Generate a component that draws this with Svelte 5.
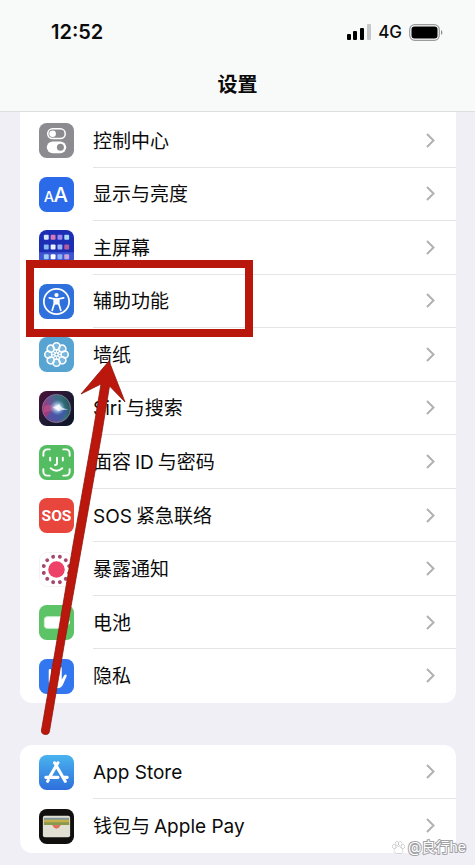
<script lang="ts">
	interface Row {
		icon: string;
		// runs of text, split where the script changes
		label: string[];
	}

	const general: Row[] = [
		{ icon: 'control', label: ['控制中心'] },
		{ icon: 'display', label: ['显示与亮度'] },
		{ icon: 'home', label: ['主屏幕'] },
		{ icon: 'access', label: ['辅助功能'] },
		{ icon: 'wallpaper', label: ['墙纸'] },
		{ icon: 'siri', label: ['Siri', '与搜索'] },
		{ icon: 'face', label: ['面容', 'ID', '与密码'] },
		{ icon: 'sos', label: ['SOS', '紧急联络'] },
		{ icon: 'exposure', label: ['暴露通知'] },
		{ icon: 'battery', label: ['电池'] },
		{ icon: 'privacy', label: ['隐私'] }
	];
	const store: Row[] = [
		{ icon: 'appstore', label: ['App Store'] },
		{ icon: 'wallet', label: ['钱包与', 'Apple Pay'] }
	];
	const groups = [general, store];

	const petals = [0, 45, 90, 135, 180, 225, 270, 315];
	const dots = [15, 45, 75, 105, 135, 165, 195, 225, 255, 285, 315, 345];
	const apps = [
		['#d9e6ff', '#d779b5', '#9b86f0', '#a9d8f5'],
		['#83b8f2', '#e8f3ff', '#9db4f5', '#b55a9c'],
		['#9ecbf7', '#ffffff', '#8eb0f5', '#c9a3dc']
	];
</script>

{#snippet icon(name: string)}
	<svg class="icon" viewBox="0 0 36 36" aria-hidden="true">
		{#if name === 'control'}
			<rect width="36" height="36" rx="8" fill="#8c8c90" />
			<rect x="9" y="6" width="18" height="10" rx="5" fill="none" stroke="#fff" stroke-width="1.6" />
			<circle cx="14" cy="11" r="3.4" fill="#fff" />
			<rect x="8" y="19" width="20" height="12" rx="6" fill="#fff" />
			<circle cx="22" cy="25" r="3.6" fill="#8c8c90" />
		{:else if name === 'display'}
			<rect width="36" height="36" rx="8" fill="#2b6bea" />
			<text x="5" y="26" font-size="15" font-weight="500" fill="#fff">A</text>
			<text x="15" y="26" font-size="21" font-weight="500" fill="#fff">A</text>
		{:else if name === 'home'}
			<rect width="36" height="36" rx="8" fill="#1c2fb4" />
			<path d="M0 23h36v5a8 8 0 0 1-8 8H8a8 8 0 0 1-8-8z" fill="#3d55cf" />
			{#each apps as line, r}
				{#each line as color, c}
					<rect x={5 + c * 7} y={5 + r * 10} width="5" height="5" rx="1" fill={color} />
				{/each}
			{/each}
		{:else if name === 'access'}
			<rect width="36" height="36" rx="8" fill="#2e70dc" />
			<circle cx="18" cy="18" r="13" fill="none" stroke="#fff" stroke-width="1.8" />
			<circle cx="18" cy="11.4" r="2.2" fill="#fff" />
			<path
				d="M10.6 14.2l5.2 1.2v4.6l-2.2 7M25.4 14.2l-5.2 1.2v4.6l2.2 7"
				fill="none"
				stroke="#fff"
				stroke-width="1.8"
				stroke-linecap="round"
			/>
			<path d="M15.2 14.6h5.6v6.6h-5.6z" fill="#fff" />
		{:else if name === 'wallpaper'}
			<rect width="36" height="36" rx="8" fill="#57a3d2" />
			{#each petals as angle}
				<circle
					cx="18"
					cy="9.6"
					r="3.7"
					fill="#a6d0e8"
					fill-opacity=".45"
					stroke="#fff"
					stroke-width="1.6"
					transform="rotate({angle} 18 18)"
				/>
				<circle cx="18" cy="14" r="1.6" fill="none" stroke="#fff" transform="rotate({angle + 22} 18 18)" />
			{/each}
			<circle cx="18" cy="18" r="2.2" fill="#fff" />
			<circle cx="18" cy="18" r="1" fill="#57a3d2" />
		{:else if name === 'siri'}
			<defs>
				<linearGradient id="siri-bg" x1="0" y1="0" x2="1" y2="1">
					<stop offset="0" stop-color="#4b1238" />
					<stop offset=".5" stop-color="#1f1a33" />
					<stop offset="1" stop-color="#0c1526" />
				</linearGradient>
				<linearGradient id="siri-orb" x1="0" y1=".6" x2="1" y2=".3">
					<stop offset="0" stop-color="#b52f74" />
					<stop offset=".4" stop-color="#5f5a96" />
					<stop offset=".7" stop-color="#33727c" />
					<stop offset="1" stop-color="#27515a" />
				</linearGradient>
				<radialGradient id="siri-glow">
					<stop offset="0" stop-color="#fff" />
					<stop offset=".3" stop-color="#d8efff" stop-opacity=".85" />
					<stop offset="1" stop-color="#8ab8f0" stop-opacity="0" />
				</radialGradient>
			</defs>
			<rect width="36" height="36" rx="8" fill="url(#siri-bg)" />
			<circle cx="18" cy="18" r="14.5" fill="url(#siri-orb)" stroke="#8f7f9c" stroke-width=".8" />
			<path d="M7 27c5-6 10-8 23-9-2 8-8 13-14 13-4 0-7-2-9-4z" fill="#3e55ad" fill-opacity=".7" />
			<path d="M5 16c6-3 11-1 15 1-5 3-10 4-15 5z" fill="#d0568f" fill-opacity=".5" />
			<circle cx="19" cy="17" r="8" fill="url(#siri-glow)" />
			<path d="M14 17q5-2 7-4 0 4 9 6-7 0-10 2-2-3-6-4z" fill="#fff" fill-opacity=".7" />
		{:else if name === 'face'}
			<rect width="36" height="36" rx="8" fill="#55bd61" />
			<g fill="none" stroke="#fff" stroke-width="2" stroke-linecap="round">
				<path d="M4.5 11V8.5a4 4 0 0 1 4-4H11M25 4.5h2.5a4 4 0 0 1 4 4V11M31.5 25v2.5a4 4 0 0 1-4 4H25M11 31.5H8.5a4 4 0 0 1-4-4V25" />
				<path d="M11.5 13v3M24.5 13v3M18.5 13v6q0 1.5-2 1.5M12 24q6 5 12 0" />
			</g>
		{:else if name === 'sos'}
			<rect width="36" height="36" rx="8" fill="#e8453c" />
			<text class="sos" x="18" y="24" font-size="16" font-weight="700" text-anchor="middle" fill="#fff">SOS</text>
		{:else if name === 'exposure'}
			<rect x=".5" y=".5" width="35" height="35" rx="8" fill="#fff" stroke="#f4f2f4" />
			<circle cx="18" cy="18" r="8.5" fill="#ee4168" />
			{#each dots as angle}
				<circle cx="18" cy="4.5" r="2" fill="#a5486f" transform="rotate({angle} 18 18)" />
			{/each}
		{:else if name === 'battery'}
			<rect width="36" height="36" rx="8" fill="#5cc466" />
			<rect x="5.5" y="12" width="23" height="12" rx="3" fill="#fff" stroke="#c9f0cc" />
			<path d="M30.5 15.5a3 3 0 0 1 0 5z" fill="#fff" />
		{:else if name === 'privacy'}
			<rect width="36" height="36" rx="8" fill="#3377f0" />
			<path
				d="M10 11.5a1.3 1.3 0 0 1 2.6 0V18h1V8.5a1.3 1.3 0 0 1 2.6 0V17h1V7.5a1.3 1.3 0 0 1 2.6 0V17h1V9.5a1.3 1.3 0 0 1 2.6 0V21l2.6-4.300c1-1.400 3-.6 2.400 1l-3.600 8.300c-1.200 2.600-3 4-6.300 4-5 0-8.500-3-8.500-8z"
				fill="#fff"
			/>
		{:else if name === 'appstore'}
			<defs>
				<linearGradient id="store-bg" x1="0" y1="0" x2="0" y2="1">
					<stop offset="0" stop-color="#49b3ee" />
					<stop offset="1" stop-color="#2e6fdc" />
				</linearGradient>
			</defs>
			<rect width="36" height="36" rx="8" fill="url(#store-bg)" />
			<g stroke="#fff" stroke-width="3.2" stroke-linecap="round">
				<path d="M19.5 8L11 22.5M16 8l11 19M7 23h12.5M25.5 23H29M9.500 26l-.6 1" />
			</g>
		{:else}
			<rect width="36" height="36" rx="8" fill="#12100f" />
			<rect x="4" y="7" width="28" height="22" rx="2" fill="#e2dfd3" />
			<path d="M5 9h26v3H5z" fill="#7d9a9c" />
			<path d="M5 11h26v3H5z" fill="#c7b04c" />
			<path d="M5 13.5h26v3.5H5z" fill="#8a9a4d" />
			<path d="M5 16.5h8.5q1.5 4.5 4.5 4.5t4.5-4.5H31V28H5z" fill="#e2dfd3" />
			<path d="M14 16.5h8q-1 3.700-4 3.700t-4-3.700z" fill="#dd7262" />
		{/if}
	</svg>
{/snippet}

<div class="phone">
	<header>
		<div class="status">
			<span class="time">12:52</span>
			<div class="signals">
				<svg width="24" height="16" viewBox="0 0 24 16" aria-hidden="true">
					<rect x="0" y="10" width="4" height="6" rx="1" />
					<rect x="6" y="7" width="4" height="9" rx="1" />
					<rect x="13" y="4" width="4" height="12" rx="1" />
					<rect x="20" y="0" width="4" height="16" rx="1" fill="#c6c7c8" />
				</svg>
				<span class="network">4G</span>
				<svg width="34" height="17" viewBox="0 0 34 17" aria-hidden="true">
					<rect x=".7" y=".7" width="29.6" height="15.6" rx="5" fill="none" stroke="#9a9b9c" stroke-width="1.2" />
					<rect x="2.5" y="2.5" width="26" height="12" rx="3" />
					<path d="M32 6a3 3 0 0 1 0 5z" fill="#8a8b8c" />
				</svg>
			</div>
		</div>
		<h1>设置</h1>
	</header>

	<main>
		{#each groups as group, g}
			<ul class:first={g === 0}>
				{#each group as row}
					<li>
						<a href="#{row.icon}">
							{@render icon(row.icon)}
							<span class="body">
								<span class="label">
									{#each row.label as run}<span>{run}</span>{/each}
								</span>
								<svg class="chevron" width="9" height="15" viewBox="0 0 9 15" aria-hidden="true">
									<path d="M1 1l6.5 6.5L1 14" fill="none" stroke="#b1b1b4" stroke-width="2" />
								</svg>
							</span>
						</a>
					</li>
				{/each}
			</ul>
		{/each}
	</main>

	<!-- marks drawn over the list -->
	<div class="frame"></div>
	<svg class="arrow" width="50" height="380" viewBox="78 358 50 380" aria-hidden="true">
		<path
			d="M109 361L125 402 109.5 386 101.5 435 82 545 65 640 49.5 731a4 4 0 0 1-8-1L57 640 73 545 92.5 435 101 384 81 394z"
			fill="#bb170c"
			stroke="#8f160e"
			stroke-width=".8"
		/>
	</svg>
	<div class="watermark">
		<svg width="13" height="13" viewBox="0 0 13 13" aria-hidden="true">
			<g fill="#fff" stroke="#a2a2a6" stroke-width=".8">
				<ellipse cx="2.2" cy="5.5" rx="1.5" ry="2" />
				<ellipse cx="4.9" cy="2.7" rx="1.5" ry="2" />
				<ellipse cx="8.3" cy="2.7" rx="1.5" ry="2" />
				<ellipse cx="10.9" cy="5.5" rx="1.5" ry="2" />
				<path d="M6.5 5.8c1.6 0 4.3 2.8 4.3 4.6S8.5 12.5 6.5 12s-4.3.2-4.3-1.6 2.700-4.600 4.300-4.600z" />
			</g>
		</svg>
		<span>@良行he</span>
	</div>
</div>

<style>
	:global(body) {
		margin: 0;
		background: #f0eff5;
	}
	.phone {
		position: relative;
		min-height: 100vh;
		overflow: hidden;
		background: #f0eff5;
		color: #0b0b0b;
		font-family: Inter, 'Noto Sans CJK SC', sans-serif;
	}
	header {
		background: #f8f9f9;
		border-bottom: 1px solid #dfdfe1;
	}
	.status {
		display: flex;
		justify-content: space-between;
		align-items: center;
		padding: 20px 32px 0 51px;
		height: 24px;
	}
	.time {
		font-size: 20px;
		font-weight: 600;
	}
	.signals {
		display: flex;
		align-items: center;
		gap: 7px;
	}
	.network {
		font-size: 17px;
		font-weight: 500;
	}
	h1 {
		margin: 0;
		padding: 26px 0 11px;
		font-size: 20px;
		line-height: 30px;
		font-weight: 700;
		text-align: center;
	}
	ul {
		display: grid;
		box-sizing: border-box;
		grid-auto-rows: 1fr;
		margin: 0 19px 12px 20px;
		padding: 0;
		min-height: 108px;
		border-radius: 12px;
		background: #fff;
		list-style: none;
	}
	ul.first {
		margin-bottom: 42px;
		padding-top: 2px;
		min-height: 591px;
		border-radius: 0 0 12px 12px;
	}
	li,
	a {
		display: flex;
		flex: 1;
	}
	a {
		align-items: center;
		gap: 19px;
		padding-left: 19px;
		color: inherit;
		text-decoration: none;
	}
	.icon {
		width: 35px;
		height: 35px;
	}
	.sos {
		font-family: Roboto, sans-serif;
	}
	.body {
		display: flex;
		flex: 1;
		align-self: stretch;
		align-items: center;
		justify-content: space-between;
		padding-right: 21px;
		border-bottom: 1px solid #e4e4e7;
	}
	li:last-child .body {
		border-bottom-color: transparent;
	}
	.label {
		display: flex;
		gap: 4px;
		padding-top: 3px;
		font-size: 19px;
		line-height: 30px;
	}
	.frame {
		position: absolute;
		top: 260px;
		left: 26px;
		width: 211px;
		height: 61px;
		border: 8px solid #b9170c;
	}
	.arrow {
		position: absolute;
		top: 358px;
		left: 78px;
		overflow: visible;
	}
	.watermark {
		position: absolute;
		right: 9px;
		bottom: 8px;
		display: flex;
		align-items: center;
		gap: 3px;
		color: #fff;
		font-size: 14px;
		line-height: 20px;
		-webkit-text-stroke: 2px #a2a2a6;
		paint-order: stroke fill;
	}
</style>
